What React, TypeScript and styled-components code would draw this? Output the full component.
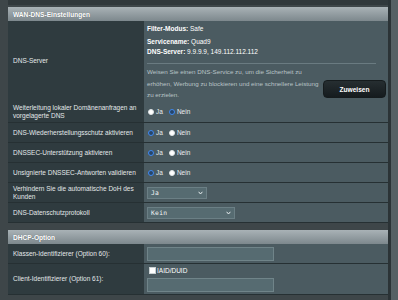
import React from "react";
import styled, { createGlobalStyle } from "styled-components";

const GlobalStyle = createGlobalStyle`
  html, body { margin: 0; padding: 0; background: #566064; }
  body { font-family: "Liberation Sans", Arial, sans-serif; }
  * { box-sizing: border-box; }
`;

const Page = styled.div`
  width: 398px;
  height: 300px;
  overflow: hidden;
  background: #566064;
  display: flex;
`;

const Panel = styled.div`
  width: 391px;
  height: 300px;
  background: #3e4649;
  padding-left: 8px;
  border-right: 3px solid #2b3336;
  display: flex;
  flex-direction: column;
`;

const PrevEnd = styled.div`
  height: 5px;
  background: #30383b;
  margin-bottom: 2px;
`;

const Table = styled.div<{ $gapTop?: number }>`
  width: 380px;
  display: flex;
  flex-direction: column;
  margin-top: ${(p) => p.$gapTop ?? 0}px;
`;

const Header = styled.div`
  height: 14px;
  background: linear-gradient(#a9b2b6, #7d888d);
  color: #ffffff;
  font-weight: bold;
  font-size: 6.6px;
  padding-left: 5px;
  display: flex;
  align-items: center;
  text-shadow: 0 0 1px rgba(0, 0, 0, 0.35);
`;

const Row = styled.div<{ $h: number }>`
  display: grid;
  grid-template-columns: 136px 1fr;
  height: ${(p) => p.$h}px;
  border-bottom: 1px solid #263033;
`;

const Label = styled.div`
  background: #2f3b3f;
  color: #e4e9ea;
  font-size: 6.5px;
  line-height: 8px;
  padding: 0 4px 0 5px;
  display: flex;
  align-items: center;
`;

const Value = styled.div<{ $col?: boolean }>`
  background: #4b5b61;
  color: #ffffff;
  font-size: 6.5px;
  padding-left: 3px;
  display: flex;
  flex-direction: ${(p) => (p.$col ? "column" : "row")};
  justify-content: ${(p) => (p.$col ? "center" : "flex-start")};
  align-items: ${(p) => (p.$col ? "flex-start" : "center")};
`;

const DnsValue = styled.div`
  background: #4b5b61;
  color: #ffffff;
  font-size: 6.5px;
  padding: 3px 0 0 3px;
  display: flex;
  flex-direction: column;
`;

const InfoLine = styled.div<{ $gap?: number }>`
  line-height: 10.5px;
  height: 10.5px;
  margin-bottom: ${(p) => p.$gap ?? 0}px;
  white-space: nowrap;
  b { font-weight: bold; }
`;

const Divider = styled.div`
  width: 229px;
  height: 1px;
  background: #6a7b81;
  margin-top: 5.5px;
`;

const AssignRow = styled.div`
  display: flex;
  justify-content: space-between;
  align-items: flex-start;
  padding-right: 2px;
`;

const Description = styled.div`
  color: #b9c4c7;
  font-size: 6.25px;
  line-height: 11.5px;
  margin-top: 2.25px;
  white-space: nowrap;
`;

const AssignButton = styled.button`
  width: 63px;
  height: 18px;
  margin-top: 16px;
  border: 1px solid #151b1d;
  border-radius: 4px;
  background: linear-gradient(#262e31, #151b1e);
  color: #ffffff;
  font-family: "Liberation Sans", Arial, sans-serif;
  font-weight: bold;
  font-size: 6.6px;
  padding: 0;
`;

const RadioGroup = styled.div`
  display: flex;
  align-items: center;
  padding-left: 1px;
`;

const RadioDot = styled.span<{ $on?: boolean }>`
  width: 6px;
  height: 6px;
  border-radius: 50%;
  display: inline-block;
  background: ${(p) => (p.$on ? "#27456a" : "#ffffff")};
  border: ${(p) => (p.$on ? "1.3px solid #3f8af0" : "0.5px solid #dfe4e6")};
  margin-right: 2px;
`;

const RadioText = styled.span`
  color: #e9eef0;
  font-size: 6.5px;
  margin-right: 6px;
`;

const SelectBox = styled.div<{ $w: number }>`
  width: ${(p) => p.$w}px;
  height: 12px;
  background: #566b71;
  border: 1px solid #6b7f85;
  display: flex;
  align-items: center;
  justify-content: space-between;
  padding: 0 3px 0 3px;
  color: #f2f5f6;
  font-family: "DejaVu Sans Mono", "Liberation Mono", monospace;
  font-size: 6.3px;
  letter-spacing: 0.3px;
`;

const Chevron = styled.svg`
  width: 5px;
  height: 4px;
`;

const TextInput = styled.div`
  width: 127px;
  height: 14px;
  background: #566b71;
  border: 1px solid #708489;
`;

const CheckLine = styled.div`
  display: flex;
  align-items: center;
  height: 8px;
  margin-bottom: 3px;
  padding-left: 2px;
  color: #ffffff;
  font-size: 6.5px;
`;

const CheckBox = styled.span`
  width: 7px;
  height: 7px;
  background: #ffffff;
  border: 0.5px solid #c9d0d2;
  margin-right: 1px;
  display: inline-block;
`;

const Select: React.FC<{ w: number; value: string }> = ({ w, value }) => (
  <SelectBox $w={w}>
    <span>{value}</span>
    <Chevron viewBox="0 0 5 4">
      <path d="M0.6 0.8 L2.5 3 L4.4 0.8" fill="none" stroke="#e8eef0" strokeWidth="1" />
    </Chevron>
  </SelectBox>
);

const YesNo: React.FC<{ yes: boolean }> = ({ yes }) => (
  <RadioGroup>
    <RadioDot $on={yes} />
    <RadioText>Ja</RadioText>
    <RadioDot $on={!yes} />
    <RadioText>Nein</RadioText>
  </RadioGroup>
);

export default function App() {
  return (
    <Page>
      <GlobalStyle />
      <Panel>
        <PrevEnd />
        <Table>
          <Header>WAN-DNS-Einstellungen</Header>
          <Row $h={80}>
            <Label>DNS-Server</Label>
            <DnsValue>
              <InfoLine $gap={2}>
                <b>Filter-Modus:</b> Safe
              </InfoLine>
              <InfoLine>
                <b>Servicename:</b> Quad9
              </InfoLine>
              <InfoLine>
                <b>DNS-Server:</b> 9.9.9.9, 149.112.112.112
              </InfoLine>
              <Divider />
              <AssignRow>
                <Description>
                  Weisen Sie einen DNS-Service zu, um die Sicherheit zu
                  <br />
                  erhöhen, Werbung zu blockieren und eine schnellere Leistung
                  <br />
                  zu erzielen.
                </Description>
                <AssignButton>Zuweisen</AssignButton>
              </AssignRow>
            </DnsValue>
          </Row>
          <Row $h={22}>
            <Label>
              Weiterleitung lokaler Domänenanfragen an
              <br />
              vorgelagerte DNS
            </Label>
            <Value>
              <YesNo yes={false} />
            </Value>
          </Row>
          <Row $h={20}>
            <Label>DNS-Wiederherstellungsschutz aktivieren</Label>
            <Value>
              <YesNo yes={true} />
            </Value>
          </Row>
          <Row $h={20}>
            <Label>DNSSEC-Unterstützung aktivieren</Label>
            <Value>
              <YesNo yes={true} />
            </Value>
          </Row>
          <Row $h={20}>
            <Label>Unsignierte DNSSEC-Antworten validieren</Label>
            <Value>
              <YesNo yes={true} />
            </Value>
          </Row>
          <Row $h={20}>
            <Label>
              Verhindern Sie die automatische DoH des
              <br />
              Kunden
            </Label>
            <Value>
              <Select w={60} value="Ja" />
            </Value>
          </Row>
          <Row $h={20}>
            <Label>DNS-Datenschutzprotokoll</Label>
            <Value>
              <Select w={88} value="Kein" />
            </Value>
          </Row>
        </Table>
        <Table $gapTop={7}>
          <Header>DHCP-Option</Header>
          <Row $h={20}>
            <Label>Klassen-Identifizierer (Option 60):</Label>
            <Value>
              <TextInput />
            </Value>
          </Row>
          <Row $h={31}>
            <Label>Client-Identifizierer (Option 61):</Label>
            <Value $col>
              <CheckLine>
                <CheckBox />
                IAID/DUID
              </CheckLine>
              <TextInput />
            </Value>
          </Row>
        </Table>
      </Panel>
    </Page>
  );
}
